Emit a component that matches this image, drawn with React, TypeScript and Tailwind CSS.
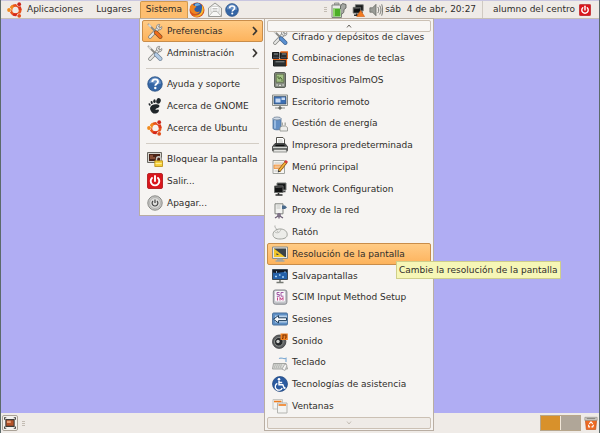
import type { ReactNode } from 'react';

type IconProps = { className?: string; children?: ReactNode };

function Icon({ className = 'size-4', children }: IconProps) {
  return (
    <svg viewBox="0 0 16 16" className={`${className} shrink-0`} fill="none" aria-hidden="true">
      {children}
    </svg>
  );
}

function UbuntuIcon() {
  return (
    <Icon>
      <circle cx="8.5" cy="8" r="4.7" stroke="#e8531c" strokeWidth="2.8" />
      <path d="M3.8 8a4.7 4.7 0 0 1 2.4-4.1" stroke="#f28a1c" strokeWidth="2.8" />
      <path d="M6.2 12.1a4.7 4.7 0 0 0 4.8 0" stroke="#d4271c" strokeWidth="2.8" />
      <path d="M11 3.9a4.7 4.7 0 0 1 2.2 4" stroke="#dd3a1a" strokeWidth="2.8" />
      <circle cx="2" cy="8" r="2.4" fill="#f7f4f0" />
      <circle cx="12" cy="2.2" r="2.4" fill="#f7f4f0" />
      <circle cx="12" cy="13.8" r="2.4" fill="#f7f4f0" />
      <circle cx="2" cy="8" r="1.9" fill="#f08a1e" />
      <circle cx="12.2" cy="2.2" r="1.9" fill="#c8281c" />
      <circle cx="12.2" cy="13.8" r="1.9" fill="#e2501c" />
    </Icon>
  );
}

function FirefoxIcon() {
  return (
    <Icon>
      <circle cx="8" cy="8" r="7.5" fill="#d9541a" />
      <circle cx="8.2" cy="6.4" r="5.6" fill="#2b5ea8" />
      <path d="M6 2c2-1.2 4.5-.6 5.5 1-2 0-3 1.3-5.5 1z" fill="#72aee0" />
      <path d="M1 4c1-.6 1.5-1.5 2-2.5.6 1 1 1.5 2 2 1 .5 2 .3 2.5 1.5-1.5.5-2.5 1.5-2 3 .6 2 3.5 2.5 5.5 1.2-1 2.3-3.5 3.3-6 2.5C2 11 .5 8 1 4z" fill="#ee8420" />
      <path d="M13 3c2 2.5 2.3 6 .2 8.8C11 15 6.5 15.6 3.5 13.5c4 .8 7.5-.5 8.7-3.5C13 7.7 13.2 5 13 3z" fill="#f5bd35" />
    </Icon>
  );
}

function MailIcon() {
  return (
    <Icon>
      <path d="M1.5 6 8 1l6.5 5v8.5h-13z" fill="#eeeeec" stroke="#9a9a96" />
      <path d="M4 4.5h8V10H4z" fill="#fff" stroke="#c4c4c0" strokeWidth=".7" />
      <path d="M5.5 6.5h5M5.5 8h5" stroke="#b4b4b0" strokeWidth=".8" />
      <path d="m2 14 4-4.5h4l4 4.5" fill="#f7f7f5" stroke="#adadaa" strokeWidth=".8" />
    </Icon>
  );
}

function HelpIcon({ className }: { className?: string }) {
  return (
    <Icon className={className}>
      <circle cx="8" cy="8" r="7.3" fill="#3465a4" stroke="#274d80" strokeWidth=".7" />
      <path d="M2 7.5a6 6 0 0 1 12 0C10 9.5 6 6 2 7.5z" fill="#7fa3d2" opacity=".7" />
      <path d="M5.3 6c0-1.8 1.2-2.6 2.8-2.6S11 4.3 11 5.8c0 2-2.7 2-2.7 4" stroke="#fff" strokeWidth="1.9" />
      <circle cx="8.3" cy="12" r="1.2" fill="#fff" />
    </Icon>
  );
}

function ToolsIcon({ handle = '#ef6c1a', edge = '#7a4a26' }: { handle?: string; edge?: string }) {
  return (
    <Icon>
      <path d="m3 14 8.5-9" stroke="#80827e" strokeWidth="3.6" strokeLinecap="round" />
      <path d="m3 14 8.5-9" stroke="#e6e6e4" strokeWidth="2.2" strokeLinecap="round" />
      <path d="M14.8 3.5 12.8 5.2 11.5 4l1.3-2.6c-2.3-.3-3.7 1.2-3.3 3.4l2.2 2c2 .4 3.7-1 3.1-3.3z" fill="#e2e2e0" stroke="#777" strokeWidth=".7" />
      <path d="m1.5 1.5 7 7" stroke="#8a8a86" strokeWidth="1.8" strokeLinecap="round" />
      <path d="m1.5 1.5 2.5 2.5" stroke="#d8d8d6" strokeWidth="1.8" />
      <path d="m9 9.5 4.3 4.3" stroke={edge} strokeWidth="4.2" strokeLinecap="round" />
      <path d="m9 9.5 4.3 4.3" stroke={handle} strokeWidth="3" strokeLinecap="round" />
    </Icon>
  );
}

function GnomeFootIcon() {
  return (
    <Icon>
      <g fill="#20262a">
        <ellipse cx="11.5" cy="2.9" rx="2.2" ry="2.8" transform="rotate(20 11.5 2.9)" />
        <ellipse cx="7.5" cy="3.2" rx="1.2" ry="1.9" />
        <ellipse cx="4.7" cy="4.5" rx="1" ry="1.6" transform="rotate(-15 4.7 4.5)" />
        <ellipse cx="2.6" cy="6.5" rx=".9" ry="1.3" transform="rotate(-30 2.6 6.5)" />
        <path d="M3.3 9.2C4.5 6.3 8 5.6 11 6.5c1.6.5 2 2 .6 3-1.2.9-2.7.7-3.1 1.7-.3.9 1 .6 2.4.4 1.4-.1 1.3 1.5.3 2.6-1.3 1.4-4.2 2-5.8.5-1.4-1.3-2.9-3.3-2.1-5.5z" />
      </g>
    </Icon>
  );
}

function LockScreenIcon() {
  return (
    <Icon>
      <path d="M.5 1.5h14v10H.5z" fill="#d6d4ce" stroke="#6b6963" />
      <path d="M2 3h11v7H2z" fill="#4a2418" />
      <path d="M3 5h3M3 7h5" stroke="#c87a58" />
      <path d="M9.5 10V8a2.2 2.2 0 0 1 4.4 0v2" stroke="#c9c9c6" strokeWidth="1.4" />
      <path d="M7.8 9.8h7.7v5.7H7.8z" fill="#f5cf3a" stroke="#b88a10" strokeWidth=".8" />
      <path d="M8.5 12.6h6.3" stroke="#fff0a0" />
    </Icon>
  );
}

function LogoutIcon({ className }: { className?: string }) {
  return (
    <Icon className={className}>
      <rect x=".5" y=".5" width="15" height="15" rx="1.5" fill="#d9161c" stroke="#b8262a" />
      <path d="M5 5a4.3 4.3 0 1 0 6 0" stroke="#fff" strokeWidth="1.9" strokeLinecap="round" />
      <path d="M8 3v5" stroke="#fff" strokeWidth="1.9" strokeLinecap="round" />
    </Icon>
  );
}

function ShutdownIcon() {
  return (
    <Icon>
      <circle cx="8" cy="8" r="7.2" fill="#c8c8c6" stroke="#8a8a87" />
      <circle cx="8" cy="8" r="5.4" fill="#dededc" stroke="#a6a6a3" strokeWidth=".7" />
      <path d="M6 6a2.9 2.9 0 1 0 4 0M8 4.5V8" stroke="#444" strokeWidth="1.2" />
    </Icon>
  );
}

function ShortcutsIcon() {
  return (
    <Icon>
      <path d="M.5 1.5H7v6H.5zM8.5 1.5h7v6h-7z" fill="#2b2f30" stroke="#1a1c1d" />
      <path d="M8.5 1h7v6.5" stroke="#e8681a" strokeWidth="1.4" />
      <path d="M1.5 9H14v6H1.5z" fill="#2b2f30" stroke="#1a1c1d" />
      <path d="M1 8.5h13.5V15" stroke="#e8681a" strokeWidth="1.2" />
      <path d="M2 3h4M10 3h4M3.5 10.8h9" stroke="#8a9092" />
      <path d="M1 6.8h6M9 6.8h5" stroke="#556" />
    </Icon>
  );
}

function PalmIcon() {
  return (
    <Icon>
      <rect x="2.5" y=".5" width="11" height="15" rx="1.5" fill="#868b82" stroke="#5c6059" />
      <path d="M4.2 2.2h7.6v8H4.2z" fill="#a3c084" stroke="#52613e" strokeWidth=".7" />
      <path d="M6 4v2l2 1V5l2 2v2" stroke="#56743c" />
      <path d="M4.500 13h1.200M7 13.300h2M10.500 13h1.200" stroke="#e2e4de" strokeWidth="1.3" />
    </Icon>
  );
}

function Monitor({ screen, children }: { screen: string; children?: ReactNode }) {
  return (
    <Icon>
      <path d="M.5 1h15v10.5H.5z" fill="#e6e7e4" stroke="#8b8e89" />
      <path d="M2 2.5h12V10H2z" fill={screen} stroke="#34485e" strokeWidth=".6" />
      {children}
    </Icon>
  );
}

function RemoteDesktopIcon() {
  return (
    <Monitor screen="#3c6fb4">
      <path d="M3.5 4.5h5v4h-5zM9.5 3.5H13V6H9.5z" fill="#c8daf2" />
      <path d="M8 12v2M3 14h10" stroke="#888b86" strokeWidth="1.2" />
      <path d="m8 12 2 2-2 2-2-2z" fill="#656863" />
    </Monitor>
  );
}

function PowerIcon() {
  return (
    <Icon>
      <path d="M1 2.5v9.8c0 2 8 2 8 0V2.5z" fill="#638fc4" stroke="#4a6c94" strokeWidth=".8" />
      <path d="M3 3.5v9" stroke="#a5c5e8" strokeWidth="1.6" />
      <ellipse cx="5" cy="2.5" rx="4" ry="1.5" fill="#d2dce8" stroke="#6f8095" strokeWidth=".8" />
      <path d="M8 15v-3.5l2-1.5h3.5l2 1.5V15z" fill="#eeeeec" stroke="#8c8e89" strokeWidth=".8" />
      <path d="M10.3 9.5v-3M13.2 9.5v-3" stroke="#a2a49f" strokeWidth="1.3" />
    </Icon>
  );
}

function PrinterIcon() {
  return (
    <Icon>
      <path d="M4.5.5H11l1.5 1.7V8h-8z" fill="#fff" stroke="#55534d" />
      <path d="M6 3h4.5M6 5h5" stroke="#b9bbb6" />
      <path d="M.6 9.5 3 6.5h10l2.4 3v4.2H.6z" fill="#4a4d4e" stroke="#333" strokeWidth=".8" />
      <path d="M3.5 8.5h9" stroke="#0d0e0e" strokeWidth="1.5" />
      <path d="M1 10.5h14" stroke="#d2d4d0" strokeWidth="1.5" />
      <path d="M2 12.5h12l1 2.5H1z" fill="#e6e6e3" stroke="#6c6e6a" strokeWidth=".7" />
    </Icon>
  );
}

function MenuEditorIcon() {
  return (
    <Icon>
      <path d="M1 1.5h11.5v13H1z" fill="#f6f5f2" stroke="#a2a49f" />
      <path d="M2.5 4H11M2.5 12h6" stroke="#c1c2be" />
      <path d="M2 6h9v3.5H2z" fill="#f5c08a" stroke="#ef8628" strokeWidth=".7" />
      <path d="m7 12 7.5-9.5" stroke="#8a5414" strokeWidth="3" />
      <path d="m7 12 7-9" stroke="#f2b33a" strokeWidth="1.8" />
      <path d="m13.3 3.7 1.5-2" stroke="#d83a3a" strokeWidth="2.6" />
      <path d="m5.8 13.5.5-2.5 2 1.5z" fill="#333" />
    </Icon>
  );
}

function NetworkIcon({ className, warning = false }: { className?: string; warning?: boolean }) {
  return (
    <Icon className={className}>
      <path d="M5 2h9v7H5z" fill="#17191a" stroke="#777a77" />
      <path d="M8 10.5h5.5" stroke="#444" strokeWidth="1.5" />
      <path d="M2.5 5H11v6.5H2.5z" fill="#101112" stroke="#6c6f6c" />
      <path d="m3.5 6.5 6.500-.5" stroke="#555" />
      <path d="M3.500 14h7M6.500 12v2" stroke="#2c2d2d" strokeWidth="1.6" />
      {warning && <path d="m11 8.500 4.500 7h-9z" fill="#f47b20" stroke="#cc5a10" strokeWidth=".7" />}
    </Icon>
  );
}

function ProxyIcon() {
  return (
    <Icon>
      <path d="M3 .8h8v10H3z" fill="#f2f2f0" stroke="#81837f" />
      <path d="M4.5 3h4M4.5 5h4" stroke="#c3c5c1" />
      <path d="M10 2.5h3l2 2L13 6h-3z" fill="#4a6a8c" />
      <path d="M7 10v2.5L3 15M7 12.5l4 2.5M7 12v3.5" stroke="#6b5d74" strokeWidth="1.3" />
      <circle cx="7" cy="12" r="2" fill="#807488" />
    </Icon>
  );
}

function MouseIcon() {
  return (
    <Icon>
      <path d="M5 6C4 4 2.5 3.5 3 1.5" stroke="#aaaca8" />
      <path d="M1 10.5C1 7 5 4.5 9 5c4 .4 6.3 2.7 6.2 5.8-.1 3-3.2 4.2-7.2 4.2s-7-1.3-7-4.500z" fill="#ecece9" stroke="#969893" strokeWidth=".9" />
      <path d="M3 8c2 1.5 5 1 6-2.8M6.5 8.5l-1.700-2" stroke="#b5b7b2" strokeWidth=".9" />
    </Icon>
  );
}

function ResolutionIcon() {
  return (
    <Icon>
      <path d="M.5 1h15v11.5H.5z" fill="#e6e7e4" stroke="#8b8e89" />
      <path d="M2 2.5h12V11H2z" fill="#3b4348" />
      <path d="M2 2.500V11h11z" fill="#f0c62a" />
      <path d="M4.5 7v2h2.500z" fill="#3b4348" />
      <path d="M5 13.500h6M3.500 15h9" stroke="#a4a6a1" strokeWidth="1.4" />
    </Icon>
  );
}

function ScreensaverIcon() {
  return (
    <Icon>
      <path d="M.5 1.5h15v10H.5z" fill="#2460a8" stroke="#3a4753" />
      <path d="M1 2h14v2.5C10 3 6 6 1 4.500z" fill="#151b26" />
      <path d="M3 8.5h2M7 7h1.5M10 9h2M12.5 4h1M4 4h1" stroke="#a5d2f7" strokeWidth="1.3" />
      <path d="M8 12v2M4.5 14.5h7" stroke="#767974" strokeWidth="1.6" />
    </Icon>
  );
}

function InputMethodIcon() {
  return (
    <Icon>
      <rect x="1.3" y="1" width="13.6" height="14.2" rx="2" fill="#c4c5ca" stroke="#85878c" />
      <rect x="3" y="2" width="10" height="10.5" rx="1" fill="#f8f7fa" />
      <path d="M7.500 3.500H5v2h2.300v1.800H4.800M11.500 3.500H9v3.700h2.500" stroke="#9a4a9c" strokeWidth=".9" />
      <path d="M5.500 8.500v3M8 11.500v-3l1.500 2 1.500-2v3" stroke="#c0307c" strokeWidth=".9" />
    </Icon>
  );
}

function SessionsIcon() {
  return (
    <Icon>
      <rect x=".6" y="2" width="14.8" height="12" rx="1" fill="#5f90c6" stroke="#476f9b" />
      <path d="M3 4.500h12v7H3z" fill="#b8d2ec" />
      <path d="M1.500 8.200 6.500 4.500v2.300h8v2.800h-8V12z" fill="#f5f8fb" stroke="#22405e" />
    </Icon>
  );
}

function SoundIcon() {
  return (
    <Icon>
      <circle cx="7.2" cy="8.7" r="6.7" fill="#5c5f61" stroke="#3a3a3a" strokeWidth=".8" />
      <circle cx="6.800" cy="8.800" r="4.300" fill="#25282a" stroke="#929590" />
      <circle cx="6" cy="8.500" r="1.700" fill="#d0d2cf" />
      <path d="M8.500.5h7.300v6.500H8.500z" fill="#f0811f" />
      <path d="M11 5.500V2h3v3M10 5.500h1M13 5.200h1" stroke="#7a3206" strokeWidth="1.100" />
    </Icon>
  );
}

function KeyboardIcon() {
  return (
    <Icon>
      <path d="M7 3.500c3-1.500 4 1 7-.3V7" stroke="#82acd4" strokeWidth="1.200" />
      <path d="M1.500 8.500H14l1.500 5.500H.5z" fill="#dadbd8" stroke="#9b9d98" strokeWidth=".9" />
      <path d="M2.500 10H10M2 12h8" stroke="#9da09a" strokeDasharray="1.300 .7" />
      <path d="m10 14 3-5 2 1-2 5.500z" fill="#f5f5f3" stroke="#999" strokeWidth=".7" />
    </Icon>
  );
}

function AccessibilityIcon() {
  return (
    <Icon>
      <circle cx="8" cy="8" r="7.500" fill="#2b5ba0" stroke="#1e4379" strokeWidth=".7" />
      <circle cx="7" cy="3.200" r="1.300" fill="#fff" />
      <path d="M7 4.800v4h3.800l1.500 3.500 1.200-.6M7 6.500h3.200" stroke="#fff" strokeWidth="1.400" />
      <path d="M5.300 7.300a3.600 3.600 0 1 0 4.900 4.600" stroke="#fff" strokeWidth="1.300" />
    </Icon>
  );
}

function WindowsIcon() {
  return (
    <Icon>
      <path d="M1 1.500h9.500V11H1z" fill="#f4f4f2" stroke="#c6c7c3" />
      <path d="M2 3.500h7.500" stroke="#ef7d1e" strokeWidth="1.600" />
      <path d="M5.500 5H15v10H5.500z" fill="#f4f4f2" stroke="#b4b5b1" />
      <path d="M6.500 7H14" stroke="#ef7d1e" strokeWidth="1.600" />
    </Icon>
  );
}

function BatteryIcon() {
  return (
    <Icon>
      <path d="M3.500 1H8v2H3.500z" fill="#c8cac5" stroke="#7a7c77" strokeWidth=".7" />
      <path d="M1 3h9.500v12.500H1z" fill="#e9eae7" stroke="#80827d" />
      <path d="M2 6.500h7.500v8H2z" fill="#4cae28" />
      <path d="M3 7v7" stroke="#a4e27c" strokeWidth="1.500" />
      <path d="M9.500 7V4l2-2.500 3.500 1V6L13 7.500c0 3-.5 4-2.500 4.500" fill="#a4a7a2" stroke="#5d605b" strokeWidth=".9" />
    </Icon>
  );
}

function VolumeIcon() {
  return (
    <Icon className="size-3.5">
      <path d="M1 5.500h3l4-4v13l-4-4H1z" fill="#9a9c97" stroke="#62645f" strokeWidth=".8" />
      <path d="M10 4.500c1.500 2 1.500 5 0 7M12.200 3c2 3 2 7 0 10M14.500 1.500c1.400 4 1.400 9 0 13" stroke="#777974" strokeWidth="1.100" />
    </Icon>
  );
}

function ShowDesktopIcon() {
  return (
    <Icon className="size-3">
      <path d="M2.500 3.500h11v9h-11z" fill="#b55228" stroke="#3d3b37" strokeWidth="1.400" />
      <path d="M4 5h5v3H4z" fill="#e8a077" />
      <path d="M.5 3.500V1H3M13 1h2.500v2.500M.5 12.500V15H3M13 15h2.500v-2.500" stroke="#44423e" strokeWidth="1.500" />
    </Icon>
  );
}

function TrashIcon() {
  return (
    <Icon className="size-3.5">
      <path d="M1.500 4h13l-1.200 11.500H2.700z" fill="#ee6a22" stroke="#c2521a" strokeWidth=".8" />
      <path d="M1 1.500h14V5H1z" fill="#d5d2cc" stroke="#918e87" strokeWidth=".8" />
      <path d="M3 3h10" stroke="#77746d" />
      <path d="m6 9 2-2.200L10 9M10.800 10 10 12.500H8.500M7 12.500H5.500L5.200 10" stroke="#fff" strokeWidth="1.300" />
    </Icon>
  );
}

type Entry = { label: string; icon: ReactNode; submenu?: boolean; active?: boolean };

const systemMenu: Entry[][] = [
  [
    { label: 'Preferencias', icon: <ToolsIcon />, submenu: true, active: true },
    { label: 'Administración', icon: <ToolsIcon handle="#b4cce6" edge="#6d7f92" />, submenu: true },
  ],
  [
    { label: 'Ayuda y soporte', icon: <HelpIcon /> },
    { label: 'Acerca de GNOME', icon: <GnomeFootIcon /> },
    { label: 'Acerca de Ubuntu', icon: <UbuntuIcon /> },
  ],
  [
    { label: 'Bloquear la pantalla', icon: <LockScreenIcon /> },
    { label: 'Salir...', icon: <LogoutIcon /> },
    { label: 'Apagar...', icon: <ShutdownIcon /> },
  ],
];

const preferences: Entry[] = [
  { label: 'Cifrado y depósitos de claves', icon: <ToolsIcon handle="#5a8fd0" edge="#3c5f8c" /> },
  { label: 'Combinaciones de teclas', icon: <ShortcutsIcon /> },
  { label: 'Dispositivos PalmOS', icon: <PalmIcon /> },
  { label: 'Escritorio remoto', icon: <RemoteDesktopIcon /> },
  { label: 'Gestión de energía', icon: <PowerIcon /> },
  { label: 'Impresora predeterminada', icon: <PrinterIcon /> },
  { label: 'Menú principal', icon: <MenuEditorIcon /> },
  { label: 'Network Configuration', icon: <NetworkIcon /> },
  { label: 'Proxy de la red', icon: <ProxyIcon /> },
  { label: 'Ratón', icon: <MouseIcon /> },
  { label: 'Resolución de la pantalla', icon: <ResolutionIcon />, active: true },
  { label: 'Salvapantallas', icon: <ScreensaverIcon /> },
  { label: 'SCIM Input Method Setup', icon: <InputMethodIcon /> },
  { label: 'Sesiones', icon: <SessionsIcon /> },
  { label: 'Sonido', icon: <SoundIcon /> },
  { label: 'Teclado', icon: <KeyboardIcon /> },
  { label: 'Tecnologías de asistencia', icon: <AccessibilityIcon /> },
  { label: 'Ventanas', icon: <WindowsIcon /> },
];

function MenuItem({ entry, className = '' }: { entry: Entry; className?: string }) {
  const state = entry.active
    ? 'border-[#c98d4a] bg-linear-to-b from-[#ffcb85] to-[#fdb35c]'
    : 'border-transparent';

  return (
    <button
      role="menuitem"
      className={`flex w-full items-center gap-1 rounded-xs border px-1 text-left whitespace-nowrap ${state} ${className}`}
    >
      {entry.icon}
      <span className="grow pt-px">{entry.label}</span>
      {entry.submenu && (
        <svg viewBox="0 0 6 10" className="h-2.5 w-1.5" fill="none" aria-hidden="true">
          <path d="m1 1 3.500 4L1 9" stroke="#3a3733" strokeWidth="1.700" />
        </svg>
      )}
    </button>
  );
}

function Scroller({ label, up = false }: { label: string; up?: boolean }) {
  const look = up ? 'bg-[#f8f6f4] text-[#6a665f]' : 'bg-[#efebe7] text-[#c4bdb4]';

  return (
    <button
      aria-label={label}
      className={`z-10 flex h-3 shrink-0 items-center justify-center rounded-xs border border-[#cbc0b4] ${look}`}
    >
      <svg viewBox="0 0 6 4" className="h-1 w-1.5" fill="none" stroke="currentColor" aria-hidden="true">
        <path d={up ? 'M1 3.5 3 1l2 2.5' : 'M1 .5 3 3 5 .5'} />
      </svg>
    </button>
  );
}

function Grip() {
  return (
    <span className="flex flex-col gap-px" aria-hidden="true">
      <i className="h-px w-[3px] bg-[#c3bcb3]" />
      <i className="h-px w-[3px] bg-[#c3bcb3]" />
      <i className="h-px w-[3px] bg-[#c3bcb3]" />
    </span>
  );
}

function SystemMenu() {
  return (
    <div role="menu" aria-label="Sistema" className="w-[126px] border border-[#b9aea3] bg-[#f6f4f2] p-px pl-0.5">
      {systemMenu.map((group, i) => (
        <div key={i}>
          {i > 0 && <hr className="m-1 border-[#d3cdc5]" />}
          {group.map((entry) => (
            <MenuItem key={entry.label} entry={entry} className="h-[22px]" />
          ))}
        </div>
      ))}
    </div>
  );
}

function PreferencesMenu() {
  return (
    <div
      role="menu"
      aria-label="Preferencias"
      className="-ml-px flex w-[170px] flex-col border border-[#b9aea3] bg-[#f6f4f2] px-0.5 py-px"
    >
      <Scroller label="Desplazar hacia arriba" up />
      <div className="-mt-1.5 flex grow flex-col">
        {preferences.map((entry) => (
          <div key={entry.label} className="relative flex flex-1">
            <MenuItem entry={entry} />
            {entry.active && (
              <div
                role="tooltip"
                className="absolute top-[18px] left-[129px] z-20 border border-[#cfcf8a] bg-[#f6f6b6] px-0.5 py-0.5 leading-3 whitespace-nowrap"
              >
                Cambie la resolución de la pantalla
              </div>
            )}
          </div>
        ))}
      </div>
      <Scroller label="Desplazar hacia abajo" />
    </div>
  );
}

function TopPanel() {
  return (
    <header className="flex h-[19px] shrink-0 items-center justify-between border-t border-b border-t-[#c9c6e0] border-b-[#c6bfb6] bg-[#efebe7] pr-2 pl-1.5">
      <nav className="flex h-full items-center">
        <button className="flex items-center gap-1">
          <UbuntuIcon />
          Aplicaciones
        </button>
        <button className="ml-[9px] h-full px-1">Lugares</button>
        <button className="ml-1 h-full rounded-t-xs border border-b-0 border-[#d0994f] bg-[#fdbe70] px-[5px]">
          Sistema
        </button>
        <button aria-label="Firefox" className="ml-px"><FirefoxIcon /></button>
        <button aria-label="Correo" className="ml-0.5"><MailIcon /></button>
        <button aria-label="Ayuda" className="ml-0.5"><HelpIcon className="size-3.5" /></button>
      </nav>
      <div className="flex h-full items-center">
        <Grip />
        <button aria-label="Batería" className="ml-1"><BatteryIcon /></button>
        <button aria-label="Red" className="ml-1"><NetworkIcon className="size-3.5" warning /></button>
        <button aria-label="Volumen" className="ml-1"><VolumeIcon /></button>
        <time className="ml-0.5 whitespace-pre">sáb  4 de abr, 20:27</time>
        <span className="mx-1.5 h-full border-l border-[#d0cac2]" />
        <button className="ml-1 flex items-center gap-1">
          alumno del centro
          <LogoutIcon className="size-3" />
        </button>
      </div>
    </header>
  );
}

function BottomPanel() {
  return (
    <footer className="flex h-5 shrink-0 items-center justify-between bg-[#efebe7] px-px">
      <div className="flex items-center gap-1">
        <button
          aria-label="Mostrar el escritorio"
          className="flex size-4 items-center justify-center rounded-xs border border-[#aaa297] bg-[#f3f0ed]"
        >
          <ShowDesktopIcon />
        </button>
        <Grip />
      </div>
      <div className="flex items-center gap-[3px]">
        <div className="flex gap-px border border-[#b7a68c] bg-[#f0e6d8]">
          <button aria-label="Área de trabajo 1" className="h-3.5 w-[19px] bg-[#d8912b]" />
          <button aria-label="Área de trabajo 2" className="h-3.5 w-[19px] bg-[#b0a698]" />
        </div>
        <button aria-label="Papelera"><TrashIcon /></button>
      </div>
    </footer>
  );
}

export default function App() {
  return (
    <div className="relative flex h-screen flex-col overflow-hidden border-x border-[#5c6a6a] bg-[#b0adf3] font-['DejaVu_Sans',sans-serif] text-[9px] text-[#2f2d2a]">
      <TopPanel />
      <main className="grow" />
      <BottomPanel />
      <div className="absolute top-[18px] bottom-0.5 left-[138px] flex items-start">
        <SystemMenu />
        <div className="flex self-stretch">
          <PreferencesMenu />
        </div>
      </div>
    </div>
  );
}
